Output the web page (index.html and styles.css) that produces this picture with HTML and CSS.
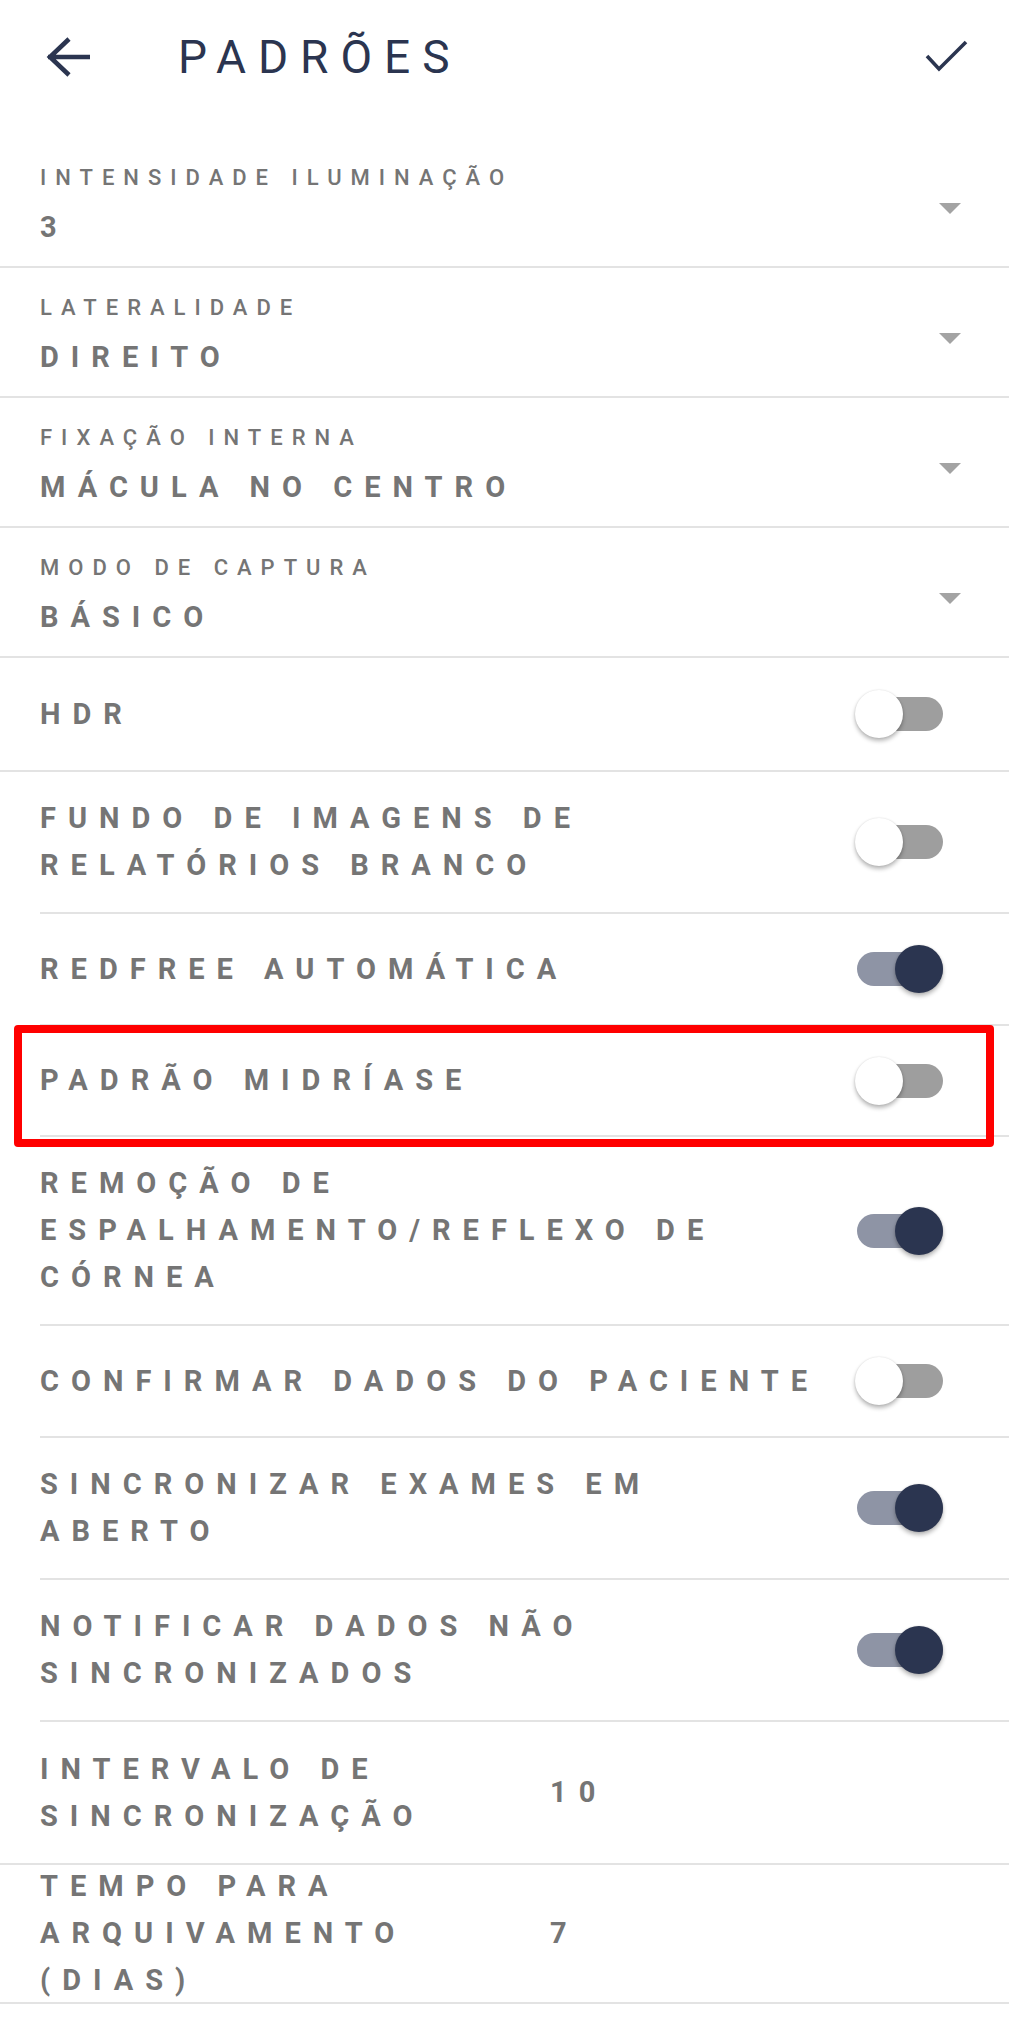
FILE: index.html
```html
<!DOCTYPE html>
<html lang="pt-BR">
<head>
<meta charset="utf-8">
<title>Padrões</title>
<link rel="stylesheet" href="styles.css">
</head>
<body>
<div class="page">
  <header class="topbar">
    <svg class="icon-back" width="56" height="56" viewBox="0 0 56 56" aria-label="Voltar">
      <path d="M8 28 H50 M29 10 L10 28 L29 46" fill="none" stroke="#2b3550" stroke-width="4.6" stroke-linejoin="miter"/>
    </svg>
    <h1 class="title">PADRÕES</h1>
    <svg class="icon-check" width="48" height="40" viewBox="0 0 48 40" aria-label="Salvar">
      <path d="M4 19 L16 32 L43 5" fill="none" stroke="#2b3550" stroke-width="3.6"/>
    </svg>
  </header>

  <main class="list">
    <div class="row row--select">
      <div class="select-text">
        <div class="select-label">INTENSIDADE ILUMINAÇÃO</div>
        <div class="select-value">3</div>
      </div>
      <span class="caret"></span>
    </div>
    <div class="row row--select">
      <div class="select-text">
        <div class="select-label">LATERALIDADE</div>
        <div class="select-value">DIREITO</div>
      </div>
      <span class="caret"></span>
    </div>
    <div class="row row--select">
      <div class="select-text">
        <div class="select-label">FIXAÇÃO INTERNA</div>
        <div class="select-value">MÁCULA NO CENTRO</div>
      </div>
      <span class="caret"></span>
    </div>
    <div class="row row--select">
      <div class="select-text">
        <div class="select-label">MODO DE CAPTURA</div>
        <div class="select-value">BÁSICO</div>
      </div>
      <span class="caret"></span>
    </div>

    <div class="row row--toggle row--hdr">
      <div class="toggle-label">HDR</div>
      <span class="switch"><span class="switch-track"></span><span class="switch-thumb"></span></span>
    </div>
    <div class="row row--toggle row--inset">
      <div class="toggle-label">FUNDO DE IMAGENS DE RELATÓRIOS BRANCO</div>
      <span class="switch"><span class="switch-track"></span><span class="switch-thumb"></span></span>
    </div>
    <div class="row row--toggle row--inset">
      <div class="toggle-label">REDFREE AUTOMÁTICA</div>
      <span class="switch is-on"><span class="switch-track"></span><span class="switch-thumb"></span></span>
    </div>
    <div class="row row--toggle row--inset row--tight">
      <div class="toggle-label">PADRÃO MIDRÍASE</div>
      <span class="switch"><span class="switch-track"></span><span class="switch-thumb"></span></span>
    </div>
    <div class="row row--toggle row--inset">
      <div class="toggle-label">REMOÇÃO DE ESPALHAMENTO/REFLEXO DE CÓRNEA</div>
      <span class="switch is-on"><span class="switch-track"></span><span class="switch-thumb"></span></span>
    </div>
    <div class="row row--toggle row--inset">
      <div class="toggle-label">CONFIRMAR DADOS DO PACIENTE</div>
      <span class="switch"><span class="switch-track"></span><span class="switch-thumb"></span></span>
    </div>
    <div class="row row--toggle row--inset">
      <div class="toggle-label">SINCRONIZAR EXAMES EM ABERTO</div>
      <span class="switch is-on"><span class="switch-track"></span><span class="switch-thumb"></span></span>
    </div>
    <div class="row row--toggle row--inset">
      <div class="toggle-label">NOTIFICAR DADOS NÃO SINCRONIZADOS</div>
      <span class="switch is-on"><span class="switch-track"></span><span class="switch-thumb"></span></span>
    </div>

    <div class="row row--input">
      <div class="input-label">INTERVALO DE SINCRONIZAÇÃO</div>
      <div class="input-value">10</div>
    </div>
    <div class="row row--input row--input-last">
      <div class="input-label">TEMPO PARA ARQUIVAMENTO (DIAS)</div>
      <div class="input-value">7</div>
    </div>
  </main>

  <div class="highlight"></div>
</div>
</body>
</html>
```
FILE: styles.css
```css
* { box-sizing: border-box; }

html, body {
  margin: 0;
  padding: 0;
  background: #ffffff;
}

body {
  font-family: Roboto, "Noto Sans", "Liberation Sans", sans-serif;
  color: #757575;
  width: 1009px;
}

.page {
  position: relative;
  width: 1009px;
  min-height: 2020px;
}

/* ---------- top bar ---------- */
.topbar {
  display: flex;
  align-items: center;
  height: 114px;
  padding: 0 38px 0 40px;
}

.icon-back {
  flex: none;
}

.title {
  margin: 0 0 0 82px;
  font-size: 46px;
  font-weight: 400;
  letter-spacing: 12px;
  color: #2b3550;
  line-height: 1;
  flex: 1;
}

.icon-check {
  flex: none;
}

/* ---------- list ---------- */
.list {
  padding-top: 24px;
}

.row {
  display: flex;
  border-bottom: 2px solid #e3e3e3;
  padding-left: 40px;
}

/* select rows */
.row--select {
  height: 130px;
  padding-top: 25px;
  padding-right: 48px;
}

.select-text {
  flex: 1;
}

.select-label {
  font-size: 22px;
  line-height: 30px;
  font-weight: 500;
  letter-spacing: 9px;
}

.select-value {
  margin-top: 14px;
  font-size: 29px;
  line-height: 40px;
  font-weight: 700;
  letter-spacing: 12px;
}

.caret {
  flex: none;
  align-self: center;
  margin-top: -12px;
  width: 0;
  height: 0;
  border-left: 11px solid transparent;
  border-right: 11px solid transparent;
  border-top: 11px solid #a3a3a3;
}

/* toggle rows */
.row--toggle {
  align-items: center;
  min-height: 112px;
  padding-top: 23px;
  padding-bottom: 23px;
  padding-right: 66px;
}

.row--hdr {
  min-height: 114px;
}

.row--inset {
  margin-left: 40px;
  padding-left: 0;
}

.row--tight {
  min-height: 111px;
}

.toggle-label {
  flex: 1;
  font-size: 29px;
  line-height: 47px;
  font-weight: 700;
  letter-spacing: 12px;
  padding-right: 8px;
}

.switch {
  position: relative;
  flex: none;
  width: 88px;
  height: 48px;
}

.switch-track {
  position: absolute;
  left: 2px;
  right: 0;
  top: 7px;
  height: 34px;
  border-radius: 17px;
  background: #9e9e9e;
}

.switch-thumb {
  position: absolute;
  top: 0;
  left: 0;
  width: 48px;
  height: 48px;
  border-radius: 50%;
  background: #ffffff;
  box-shadow: 0 3px 4px rgba(0, 0, 0, 0.28), 0 0 2px rgba(0, 0, 0, 0.12);
}

.switch.is-on .switch-track {
  background: #8e94a5;
}

.switch.is-on .switch-thumb {
  left: auto;
  right: 0;
  background: #2b3550;
}

/* input rows */
.row--input {
  align-items: center;
  height: 143px;
}

.row--input-last {
  height: 139px;
}

.input-label {
  flex: none;
  width: 510px;
  font-size: 29px;
  line-height: 47px;
  font-weight: 700;
  letter-spacing: 12px;
}

.input-value {
  font-size: 29px;
  line-height: 47px;
  font-weight: 700;
  letter-spacing: 12px;
}

/* annotation box */
.highlight {
  position: absolute;
  left: 14px;
  top: 1025px;
  width: 980px;
  height: 122px;
  border: 8px solid #ff0000;
  border-radius: 4px;
  pointer-events: none;
}
```
